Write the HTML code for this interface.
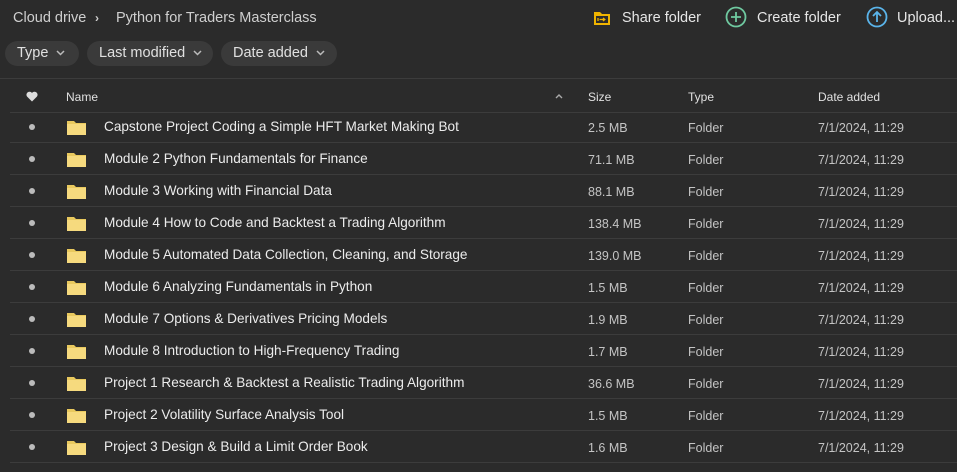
<!DOCTYPE html>
<html><head><style>
body{margin:0;width:957px;height:472px;background:#2b2b2b;font-family:"Liberation Sans",sans-serif;overflow:hidden;position:relative;color:#e6e6e6}
.a{position:absolute;white-space:nowrap}
.crumb{top:10px;font-size:14.5px;color:#cfcfcf}
.pill{top:41px;height:25px;border-radius:13px;background:#3a3a3a;font-size:14.5px;line-height:25px;color:#e0e0e0}
.pill svg{margin-left:8px;vertical-align:middle}
.act{top:10px;font-size:14.5px;color:#e6e6e6}
.line{position:absolute;left:10px;right:0;height:1px;background:#3c3c3c}
.h{top:90px;font-size:12px;color:#e0e0e0}
.row{position:absolute;left:0;width:957px;height:32px}
.dot{position:absolute;left:29px;top:13px;width:6px;height:6px;border-radius:50%;background:#bbb}
.fold{position:absolute;left:67px;top:9px;width:19px;height:15px}
.nm{position:absolute;left:104px;top:8px;font-size:13.6px;color:#ececec}
.sz{position:absolute;left:588px;top:10px;font-size:12.5px;color:#c4c4c4}
.tp{position:absolute;left:688px;top:10px;font-size:12.5px;color:#c4c4c4}
.dt{position:absolute;left:818px;top:10px;font-size:12.5px;color:#c4c4c4}
</style></head><body>
<div class="a crumb" style="left:13px">Cloud drive</div>
<div class="a crumb" style="left:95px;font-weight:bold;font-size:12px;top:11px">&#8250;</div>
<div class="a crumb" style="left:116px">Python for Traders Masterclass</div>

<svg class="a" style="left:593px;top:10px" width="18" height="16" viewBox="0 0 18 16"><path d="M1 2h6l2 2h8v11H1z" fill="#f0b400"/><rect x="3" y="6" width="12" height="7" fill="#2b2b2b"/><path d="M5 8v3M6.5 9.5h5M10 8l1.8 1.5L10 11" stroke="#f0b400" stroke-width="1.3" fill="none"/></svg>
<div class="a act" style="left:622px">Share folder</div>
<svg class="a" style="left:725px;top:6px" width="22" height="22" viewBox="0 0 22 22"><circle cx="11" cy="11" r="9.5" stroke="#6fc9a0" stroke-width="1.8" fill="none"/><path d="M11 6v10M6 11h10" stroke="#6fc9a0" stroke-width="1.8"/></svg>
<div class="a act" style="left:757px">Create folder</div>
<svg class="a" style="left:866px;top:6px" width="22" height="22" viewBox="0 0 22 22"><circle cx="11" cy="11" r="9.5" stroke="#5ab4ea" stroke-width="1.8" fill="none"/><path d="M11 16V6M7 10l4-4 4 4" stroke="#5ab4ea" stroke-width="1.8" fill="none"/></svg>
<div class="a act" style="left:897px">Upload...</div>

<div class="a pill" style="left:5px;width:74px"><span style="margin-left:12px">Type</span><svg width="9" height="6" viewBox="0 0 9 6"><path d="M1 1l3.5 3.5L8 1" stroke="#bbb" stroke-width="1.5" fill="none"/></svg></div>
<div class="a pill" style="left:87px;width:126px"><span style="margin-left:12px">Last modified</span><svg width="9" height="6" viewBox="0 0 9 6"><path d="M1 1l3.5 3.5L8 1" stroke="#bbb" stroke-width="1.5" fill="none"/></svg></div>
<div class="a pill" style="left:221px;width:116px"><span style="margin-left:12px">Date added</span><svg width="9" height="6" viewBox="0 0 9 6"><path d="M1 1l3.5 3.5L8 1" stroke="#bbb" stroke-width="1.5" fill="none"/></svg></div>

<div class="line" style="top:78px;left:0"></div>
<svg class="a" style="left:26px;top:91px" width="12" height="11" viewBox="0 0 12 11"><path d="M6 10.5L1 5.5A2.8 2.8 0 0 1 6 2a2.8 2.8 0 0 1 5 3.5z" fill="#ddd"/></svg>
<div class="a h" style="left:66px">Name</div>
<svg class="a" style="left:555px;top:93px" width="8" height="6" viewBox="0 0 8 6"><path d="M1 5l3-3 3 3" stroke="#aaa" stroke-width="1.4" fill="none"/></svg>
<div class="a h" style="left:588px">Size</div>
<div class="a h" style="left:688px">Type</div>
<div class="a h" style="left:818px">Date added</div>
<div class="line" style="top:112px"></div>

<div id="rows"></div>
<script>
var d=[["Capstone Project Coding a Simple HFT Market Making Bot","2.5 MB"],["Module 2 Python Fundamentals for Finance","71.1 MB"],["Module 3 Working with Financial Data","88.1 MB"],["Module 4 How to Code and Backtest a Trading Algorithm","138.4 MB"],["Module 5 Automated Data Collection, Cleaning, and Storage","139.0 MB"],["Module 6 Analyzing Fundamentals in Python","1.5 MB"],["Module 7 Options & Derivatives Pricing Models","1.9 MB"],["Module 8 Introduction to High-Frequency Trading","1.7 MB"],["Project 1 Research & Backtest a Realistic Trading Algorithm","36.6 MB"],["Project 2 Volatility Surface Analysis Tool","1.5 MB"],["Project 3 Design & Build a Limit Order Book","1.6 MB"]];
var h="";
d.forEach(function(r,i){var t=111+i*32;
h+='<div class="row" style="top:'+t+'px"><div class="dot"></div><svg class="fold" viewBox="0 0 19 15"><path d="M0 1h7l2 2h10v12H0z" fill="#e9c95e"/><path d="M0 4h19v11H0z" fill="#f6da7e"/></svg><div class="nm">'+r[0].replace(/&/g,'&amp;')+'</div><div class="sz">'+r[1]+'</div><div class="tp">Folder</div><div class="dt">7/1/2024, 11:29</div></div><div class="line" style="top:'+(t+31)+'px"></div>';});
document.getElementById("rows").innerHTML=h;
</script>
</body></html>
